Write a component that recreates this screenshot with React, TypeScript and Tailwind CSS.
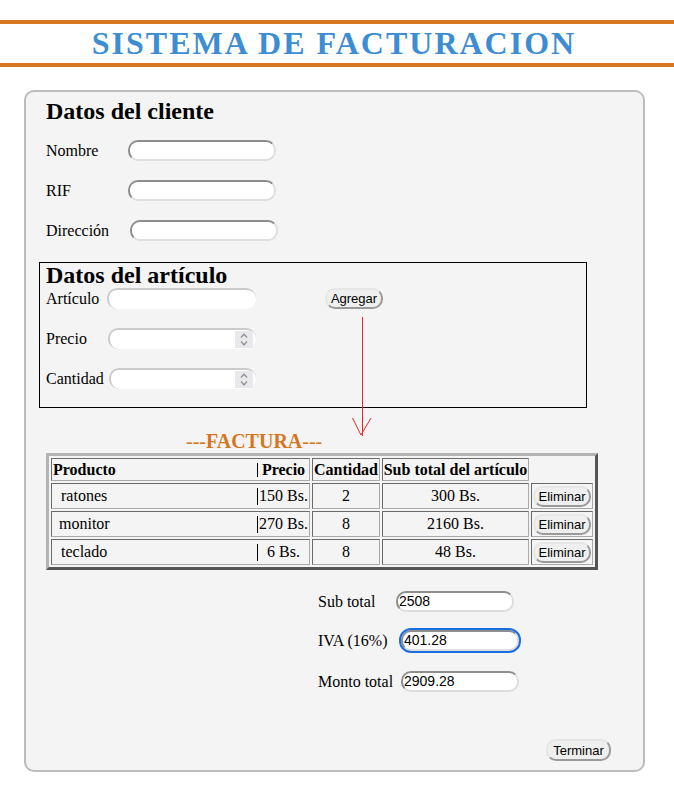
import React from "react"

const inset =
  "h-[21px] rounded-[10px] border-2 border-t-[#8e8e8e] border-l-[#8e8e8e] border-r-[#dedede] border-b-[#dedede] bg-white pl-[1px] font-['Liberation_Sans',sans-serif] text-[14px] text-black outline-none"
const soft = "h-[21px] rounded-[10px] border-t-2 border-l-2 border-t-[#cbcbcb] border-l-[#cbcbcb] bg-white"
const btn =
  "flex items-center justify-center rounded-[10px] border-2 border-t-[#e6e6e6] border-l-[#e6e6e6] border-r-[#9a9a9a] border-b-[#9a9a9a] bg-[#efefef] font-['Liberation_Sans',sans-serif] text-[13px] leading-none text-black"
const cell = "p-0 border border-t-[#6a6a6a] border-l-[#6a6a6a] border-r-[#a9a9a9] border-b-[#a9a9a9] align-middle"

const clientFields = [
  { label: "Nombre", w: "w-[82px]" },
  { label: "RIF", w: "w-[82px]" },
  { label: "Dirección", w: "w-[84px]" },
]

const items = [
  { name: "ratones", pad: "pl-[9px]", price: "150 Bs.", qty: "2", sub: "300 Bs." },
  { name: "monitor", pad: "pl-[7px]", price: "270 Bs.", qty: "8", sub: "2160 Bs." },
  { name: "teclado", pad: "pl-[9px]", price: "6 Bs.", qty: "8", sub: "48 Bs." },
]

function Spinner() {
  return (
    <div className="flex h-[17px] w-[18px] flex-col items-center justify-center gap-[3px] bg-[#e9e9ed]">
      <svg width="8" height="5" viewBox="0 0 8 5" fill="none" stroke="#8a8a8a" strokeWidth="1.2">
        <path d="M1 4.5 4 1.2 7 4.5" />
      </svg>
      <svg width="8" height="5" viewBox="0 0 8 5" fill="none" stroke="#8a8a8a" strokeWidth="1.2">
        <path d="M1 0.5 4 3.8 7 0.5" />
      </svg>
    </div>
  )
}

function NumberBox({ w }: { w: string }) {
  return (
    <div className={`${soft} ${w} flex items-center justify-end pr-[3px]`}>
      <Spinner />
    </div>
  )
}

export default function App() {
  return (
    <div className="min-h-[788px] bg-white font-['Liberation_Serif',serif] text-[16px] text-black">
      <header className="mt-[20px] border-y-4 border-[#d6761f]">
        <h1 className="pr-[6px] text-center text-[32px] font-bold leading-[39px] tracking-[2px] text-[#3d8dd3]">
          SISTEMA DE FACTURACION
        </h1>
      </header>

      <main className="relative ml-[24px] mt-[23px] w-[621px] rounded-[10px] border-2 border-[#bcbcbc] bg-[#f4f4f4] pb-[9px] pl-[20px] pt-[7px]">
        <h2 className="text-[24px] font-bold leading-[25px]">Datos del cliente</h2>
        <div className="mt-[16px] flex flex-col gap-[19px]">
          {clientFields.map((f) => (
            <div key={f.label} className="flex h-[21px] items-center">
              <span className={f.w}>{f.label}</span>
              <input readOnly className={`${inset} w-[148px]`} />
            </div>
          ))}
        </div>

        <section className="-ml-[7px] mt-[21px] w-[548px] border border-black pb-[18px] pl-[6px]">
          <h2 className="text-[24px] font-bold leading-[24px]">Datos del artículo</h2>
          <div className="mt-[1px] flex flex-col gap-[19px]">
            <div className="flex h-[21px] items-center">
              <span className="w-[61px]">Artículo</span>
              <div className={`${soft} w-[149px]`} />
              <button className={`${btn} ml-[69px] h-[21px] w-[58px]`}>Agregar</button>
            </div>
            <div className="flex h-[21px] items-center">
              <span className="w-[62px]">Precio</span>
              <NumberBox w="w-[148px]" />
            </div>
            <div className="flex h-[21px] items-center">
              <span className="w-[63px]">Cantidad</span>
              <NumberBox w="w-[147px]" />
            </div>
          </div>
        </section>

        <svg className="absolute left-[325px] top-[225px]" width="22" height="121" viewBox="0 0 22 121" fill="none" stroke="#e8262b" strokeWidth="1">
          <path d="M11.5 0V119" />
          <path d="M1.5 101 10 118 20 101" />
        </svg>

        <p className="ml-[140px] mt-[22px] text-[20px] leading-[22px] text-[#d6761f]">
          <span>---</span>
          <b>FACTURA</b>
          <span>---</span>
        </p>

        <table className="mt-[1px] border-separate border-spacing-[2px] border-[3px] border-t-[#b4b4b4] border-l-[#b4b4b4] border-r-[#555555] border-b-[#555555]">
          <thead>
            <tr className="font-bold">
              <th className={cell}>
                <div className="flex h-[21px] w-[257px] items-center">
                  <span className="flex-1 pl-[1px] text-left">Producto</span>
                  <span className="flex h-[14px] w-[52px] items-center justify-center border-l border-black">Precio</span>
                </div>
              </th>
              <th className={cell}>
                <div className="flex h-[21px] w-[66px] items-center justify-center">Cantidad</div>
              </th>
              <th className={cell}>
                <div className="flex h-[21px] w-[145px] items-center justify-center whitespace-nowrap">Sub total del artículo</div>
              </th>
              <th className="border border-transparent p-0">
                <div className="h-[21px] w-[60px]" />
              </th>
            </tr>
          </thead>
          <tbody>
            {items.map((it) => (
              <tr key={it.name}>
                <td className={cell}>
                  <div className="flex h-[24px] w-[257px] items-center">
                    <span className={`flex-1 ${it.pad}`}>{it.name}</span>
                    <span className="flex h-[17px] w-[52px] items-center justify-center border-l border-black">{it.price}</span>
                  </div>
                </td>
                <td className={cell}>
                  <div className="flex h-[24px] w-[66px] items-center justify-center">{it.qty}</div>
                </td>
                <td className={cell}>
                  <div className="flex h-[24px] w-[145px] items-center justify-center">{it.sub}</div>
                </td>
                <td className={cell}>
                  <div className="flex h-[24px] w-[60px] items-center justify-end pr-[1px]">
                    <button className={`${btn} h-[21px] w-[58px]`}>Eliminar</button>
                  </div>
                </td>
              </tr>
            ))}
          </tbody>
        </table>

        <div className="ml-[272px] mt-[21px] flex flex-col">
          <div className="flex h-[21px] items-center">
            <span className="w-[78px]">Sub total</span>
            <input readOnly value="2508" className={`${inset} w-[118px]`} />
          </div>
          <div className="mt-[18px] flex h-[21px] items-center">
            <span className="w-[83px]">IVA (16%)</span>
            <input readOnly value="401.28" className={`${inset} w-[118px] outline-2 outline-offset-0 outline-[#1a6ee0]`} style={{ outlineStyle: "solid" }} />
          </div>
          <div className="mt-[20px] flex h-[21px] items-center">
            <span className="w-[83px]">Monto total</span>
            <input readOnly value="2909.28" className={`${inset} w-[118px]`} />
          </div>
        </div>

        <div className="mt-[47px] flex justify-end pr-[32px]">
          <button className={`${btn} h-[22px] w-[65px]`}>Terminar</button>
        </div>
      </main>
    </div>
  )
}
